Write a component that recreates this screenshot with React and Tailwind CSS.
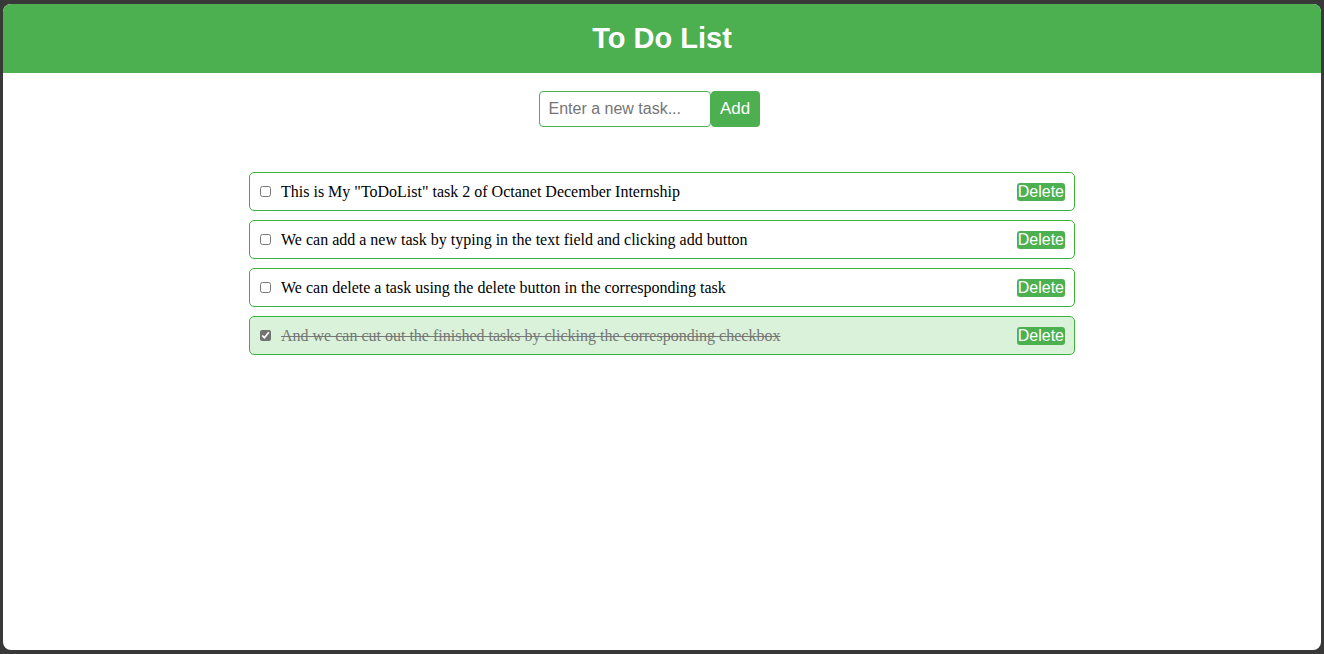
import React, { useState } from "react";

const initial = [
  { text: 'This is My "ToDoList" task 2 of Octanet December Internship', done: false },
  { text: "We can add a new task by typing in the text field and clicking add button", done: false },
  { text: "We can delete a task using the delete button in the corresponding task", done: false },
  { text: "And we can cut out the finished tasks by clicking the corresponding checkbox", done: true },
];

export default function App() {
  const [tasks, setTasks] = useState(initial);
  const [val, setVal] = useState("");
  return (
    <div className="h-[654px] w-[1324px] bg-[#383838] pt-[4px] px-[3px] pb-[4px]">
      <div className="h-full bg-white rounded-[8px] overflow-hidden flex flex-col">
        <div className="h-[69px] bg-[#4caf50] flex items-center justify-center">
          <h1 className="text-white text-[29px] font-bold font-['Liberation_Sans',Arial,sans-serif] leading-none">To Do List</h1>
        </div>
        <div className="flex justify-center mt-[18px] pr-[26px]">
          <input
            value={val}
            onChange={(e) => setVal(e.target.value)}
            placeholder="Enter a new task..."
            className="w-[172px] h-[36px] border border-[#4caf50] rounded-[4px] px-[9px] text-[16px] font-['Liberation_Sans',Arial,sans-serif] outline-none placeholder:text-[#757575]"
          />
          <button
            onClick={() => { if (val.trim()) { setTasks([...tasks, { text: val, done: false }]); setVal(""); } }}
            className="w-[49px] h-[36px] bg-[#4caf50] text-white rounded-[4px] text-[17px] font-['Liberation_Sans',Arial,sans-serif]"
          >
            Add
          </button>
        </div>
        <div className="mt-[45px] flex flex-col items-center gap-[9px]">
          {tasks.map((t, i) => (
            <div
              key={i}
              className={`w-[826px] h-[39px] border border-[#3cb43c] rounded-[5px] flex items-center pl-[10px] pr-[9px] ${t.done ? "bg-[#d9f2d9]" : "bg-white"}`}
            >
              <input
                type="checkbox"
                checked={t.done}
                onChange={() => setTasks(tasks.map((x, j) => (j === i ? { ...x, done: !x.done } : x)))}
                className={`w-[11px] h-[11px] m-0 ${t.done ? "accent-[#666] opacity-90" : ""}`}
              />
              <span
                className={`ml-[10px] flex-1 text-[16px] font-['Liberation_Serif','Times_New_Roman',serif] ${t.done ? "line-through text-[#777]" : "text-black"}`}
              >
                {t.text}
              </span>
              <button
                onClick={() => setTasks(tasks.filter((_, j) => j !== i))}
                className="bg-[#4caf50] text-white text-[16px] leading-[18px] px-[1px] rounded-[3px] font-['Liberation_Sans',Arial,sans-serif]"
              >
                Delete
              </button>
            </div>
          ))}
        </div>
      </div>
    </div>
  );
}
